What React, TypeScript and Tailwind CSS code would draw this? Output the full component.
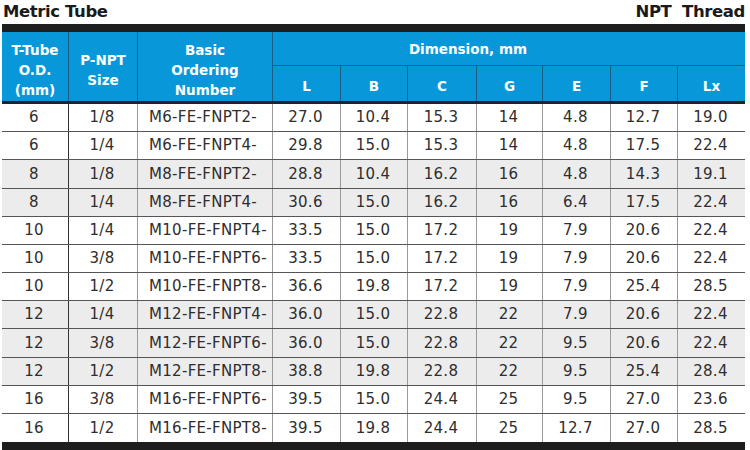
import React from "react";

const cols = "grid grid-cols-[67px_69px_135px_68px_67px_69px_66px_68px_67px_67px]";

const rows: string[][] = [
  ["6", "1/8", "M6-FE-FNPT2-", "27.0", "10.4", "15.3", "14", "4.8", "12.7", "19.0"],
  ["6", "1/4", "M6-FE-FNPT4-", "29.8", "15.0", "15.3", "14", "4.8", "17.5", "22.4"],
  ["8", "1/8", "M8-FE-FNPT2-", "28.8", "10.4", "16.2", "16", "4.8", "14.3", "19.1"],
  ["8", "1/4", "M8-FE-FNPT4-", "30.6", "15.0", "16.2", "16", "6.4", "17.5", "22.4"],
  ["10", "1/4", "M10-FE-FNPT4-", "33.5", "15.0", "17.2", "19", "7.9", "20.6", "22.4"],
  ["10", "3/8", "M10-FE-FNPT6-", "33.5", "15.0", "17.2", "19", "7.9", "20.6", "22.4"],
  ["10", "1/2", "M10-FE-FNPT8-", "36.6", "19.8", "17.2", "19", "7.9", "25.4", "28.5"],
  ["12", "1/4", "M12-FE-FNPT4-", "36.0", "15.0", "22.8", "22", "7.9", "20.6", "22.4"],
  ["12", "3/8", "M12-FE-FNPT6-", "36.0", "15.0", "22.8", "22", "9.5", "20.6", "22.4"],
  ["12", "1/2", "M12-FE-FNPT8-", "38.8", "19.8", "22.8", "22", "9.5", "25.4", "28.4"],
  ["16", "3/8", "M16-FE-FNPT6-", "39.5", "15.0", "24.4", "25", "9.5", "27.0", "23.6"],
  ["16", "1/2", "M16-FE-FNPT8-", "39.5", "19.8", "24.4", "25", "12.7", "27.0", "28.5"],
];

const grayGroups = new Set(["8", "12"]);

export default function App() {
  return (
    <div
      className="w-[750px] h-[450px] bg-white overflow-hidden"
      style={{ fontFamily: '"DejaVu Sans", Verdana, sans-serif' }}
    >
      <div className="flex justify-between items-center h-[24px] pl-[3px] pr-[5px] text-[#1a1a1a] font-bold text-[16.5px] leading-none">
        <span className="tracking-[-0.4px]">Metric Tube</span>
        <span className="tracking-[-0.4px]">NPT&nbsp;&nbsp;Thread</span>
      </div>
      <div className="ml-[2px] w-[743px]">
        <div className="h-[8px] bg-[#1e1e1e]" />
        <div className={`${cols} grid-rows-[34px_35px] bg-[#0898da] text-white font-bold text-[13.5px] leading-[20px]`}>
          <div className="row-span-2 border-r border-[#1d5d86] flex flex-col items-center justify-center text-center pt-[7px]">
            <span>T-Tube</span>
            <span>O.D.</span>
            <span>(mm)</span>
          </div>
          <div className="row-span-2 border-r border-[#1d5d86] flex flex-col items-center justify-center text-center pt-[7px]">
            <span>P-NPT</span>
            <span>Size</span>
          </div>
          <div className="row-span-2 border-r border-[#1d5d86] flex flex-col items-center justify-center text-center pt-[7px]">
            <span>Basic</span>
            <span>Ordering</span>
            <span>Number</span>
          </div>
          <div className="col-span-7 border-b border-[#1d5d86] flex items-center justify-center pr-[82px]">
            Dimension, mm
          </div>
          {["L", "B", "C", "G", "E", "F", "Lx"].map((h, i) => (
            <div
              key={h}
              className={`flex items-center justify-center pt-[4px] ${i < 6 ? "border-r border-[#1d5d86]" : ""}`}
            >
              {h}
            </div>
          ))}
        </div>
        <div className="h-[3px] bg-[#222]" />
        {rows.map((r, ri) => (
          <div
            key={ri}
            className={`${cols} ${ri === 2 || ri === 8 ? "h-[29px]" : "h-[28px]"} text-[15px] tracking-[0.3px] text-[#2e2e2e] ${
              ri < rows.length - 1 ? "border-b border-[#555]" : ""
            } ${grayGroups.has(r[0]) ? "bg-[#ececec]" : "bg-white"}`}
          >
            {r.map((c, ci) => (
              <div
                key={ci}
                className={`flex items-center ${ci === 2 ? "justify-start pl-[11px]" : "justify-center pr-[2px]"} ${
                  ci === 0 ? "border-r border-[#333]" : ci < 9 ? "border-r border-[#9a9a9a]" : ""
                }`}
              >
                {c}
              </div>
            ))}
          </div>
        ))}
        <div className="h-[10px] bg-[#1e1e1e]" />
      </div>
    </div>
  );
}
